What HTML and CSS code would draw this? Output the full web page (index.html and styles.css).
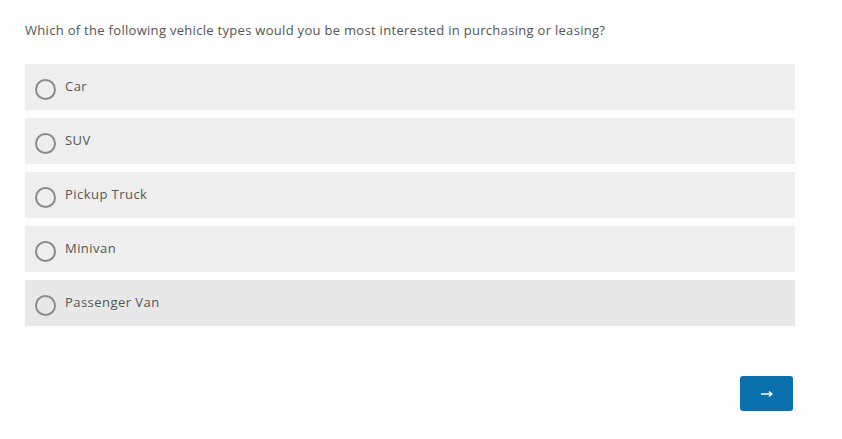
FILE: index.html
```html
<!DOCTYPE html>
<html>
<head>
<meta charset="utf-8">
<link rel="stylesheet" href="styles.css">
</head>
<body>
<div class="survey">
  <p class="question">Which of the following vehicle types would you be most interested in purchasing or leasing?</p>
  <div class="options">
    <label class="option"><span class="radio"></span><span class="label">Car</span></label>
    <label class="option"><span class="radio"></span><span class="label">SUV</span></label>
    <label class="option"><span class="radio"></span><span class="label">Pickup Truck</span></label>
    <label class="option"><span class="radio"></span><span class="label">Minivan</span></label>
    <label class="option option-hover"><span class="radio"></span><span class="label">Passenger Van</span></label>
  </div>
  <div class="actions">
    <button class="next" aria-label="Next"><svg width="14" height="8" viewBox="0 0 14 8"><path d="M1 4h11M9 1.5l3 2.5-3 2.5" fill="none" stroke="#fff" stroke-width="1.3"/></svg></button>
  </div>
</div>
</body>
</html>
```
FILE: styles.css
```css
html, body {
  margin: 0;
  padding: 0;
  background: #fdfdfd;
}
body {
  font-family: "Open Sans", "Liberation Sans", sans-serif;
  color: #555;
}
.survey {
  width: 770px;
  padding: 20px 0 0 25px;
}
.question {
  margin: 0;
  font-size: 13px;
  line-height: 20px;
  height: 44px;
  letter-spacing: 0.3px;
}
.options {
  display: flex;
  flex-direction: column;
  gap: 8px;
}
.option {
  display: flex;
  align-items: center;
  height: 46px;
  background: #eeeeee;
  padding-left: 10px;
  box-sizing: border-box;
}
.option-hover {
  background: #e8e8e8;
}
.radio {
  width: 21px;
  height: 21px;
  box-sizing: border-box;
  border: 2px solid #8a8a8a;
  border-radius: 50%;
  margin-top: 4px;
  flex: none;
}
.label {
  margin-left: 9px;
  font-size: 13px;
  color: #555;
  margin-top: -2px;
  letter-spacing: 0.45px;
}
.actions {
  display: flex;
  justify-content: flex-end;
  padding-top: 50px;
  padding-right: 2px;
}
.next {
  width: 53px;
  height: 35px;
  background: #0b6fae;
  border: none;
  border-radius: 3px;
  padding: 0;
  display: flex;
  align-items: center;
  justify-content: center;
}
.next svg {
  display: block;
  margin-top: 1px;
}
```
